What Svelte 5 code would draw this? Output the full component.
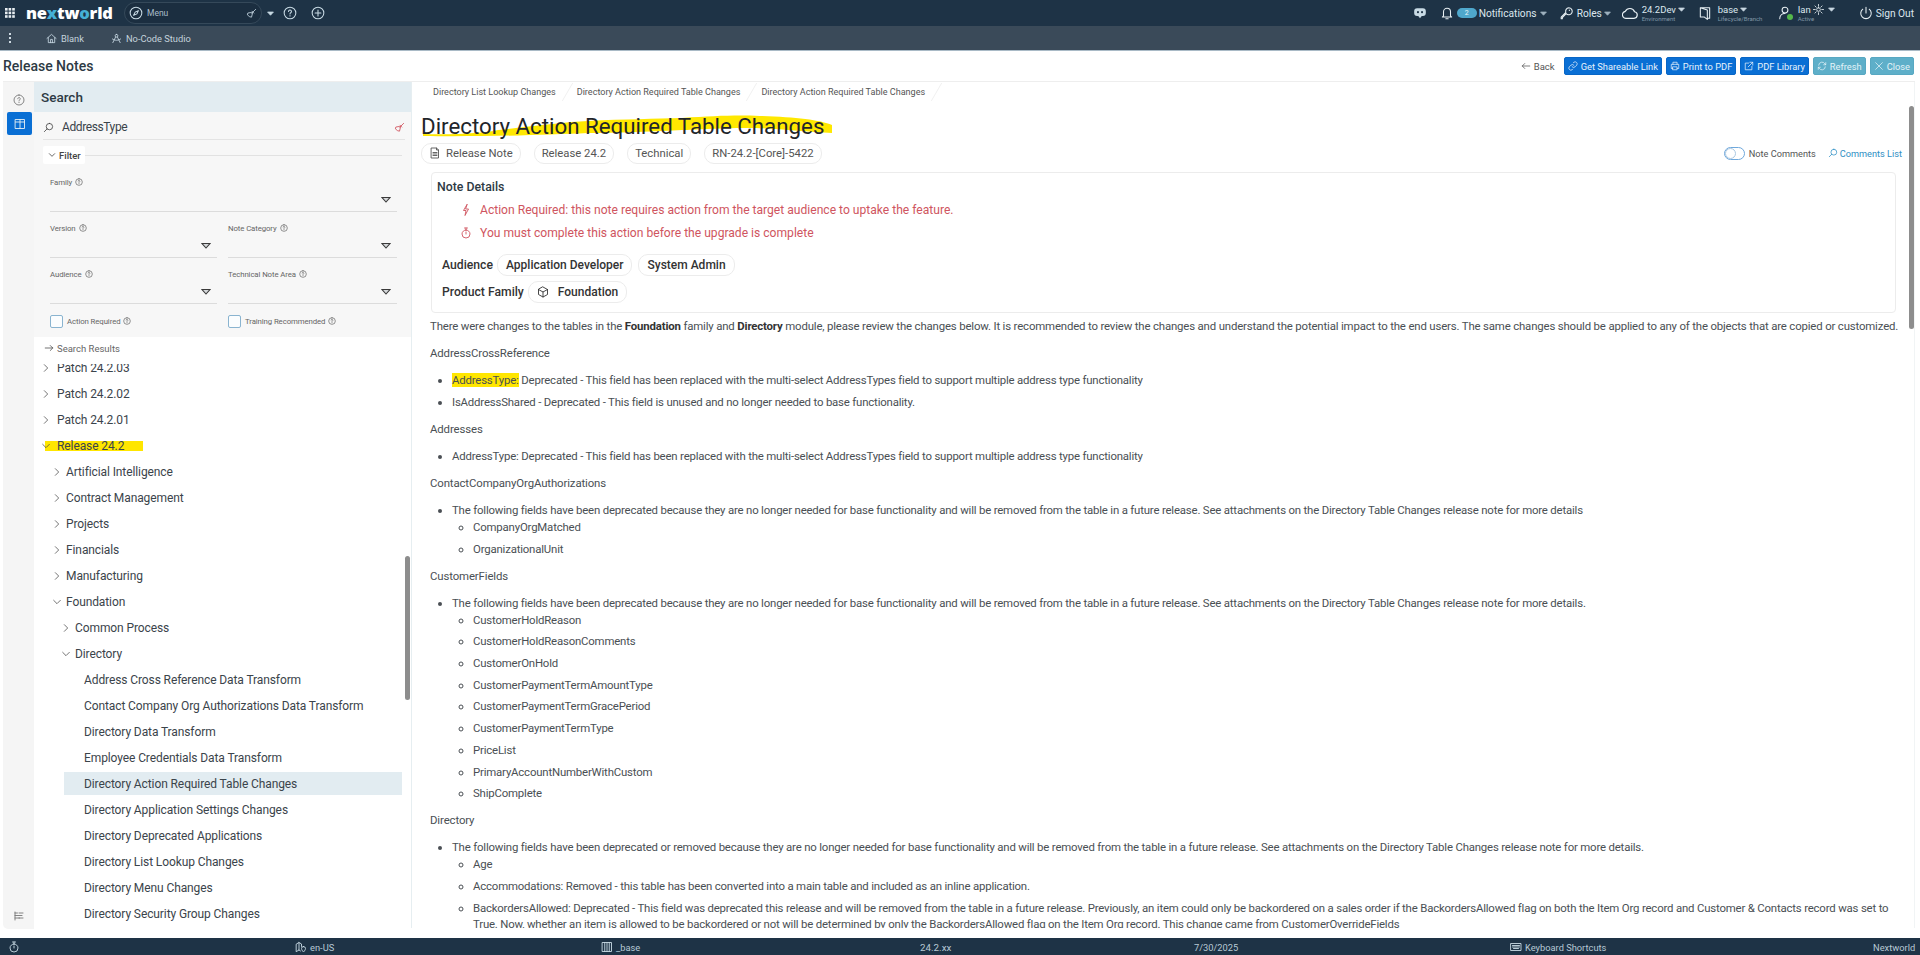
<script>
  const icons = {
    compass: 'M12 2a10 10 0 1 0 0 20a10 10 0 0 0 0-20z M16 8l-2.500 5.500L8 16l2.500-5.500z',
    broom: 'M21 3l-8 8 M13 7l4 4 M14 12l-2 8-4-1-5-4 1-4 6-1z',
    help: 'M12 2a10 10 0 1 0 0 20a10 10 0 0 0 0-20z M9.500 9.500a2.500 2.500 0 1 1 3.800 2.100c-.9.6-1.300 1-1.300 2 M12 16.500v.6',
    plus: 'M12 2a10 10 0 1 0 0 20a10 10 0 0 0 0-20z M12 7v10 M7 12h10',
    bell: 'M6 17v-7a6 6 0 0 1 12 0v7l2 2H4z M10 22h4',
    key: 'M15 3a6 6 0 1 1-4.500 10L4 20v2h-2v-3l8-8A6 6 0 0 1 15 3z M16 7v.6',
    cloud: 'M7 20h11a5 5 0 0 0 .8-9.900A7.500 7.500 0 0 0 5 9.500 5.300 5.300 0 0 0 7 20z',
    door: 'M4 3h16v18h-4 M4 3v16h7 M4 3l12 4v16l-5-4',
    user: 'M12 2a5 5 0 1 0 0 10a5 5 0 0 0 0-10z M3 22c0-6 4-9 9-9',
    sun: 'M12 8a4 4 0 1 0 0 8a4 4 0 0 0 0-8z M12 1v4 M12 19v4 M1 12h4 M19 12h4 M4.200 4.200l2.800 2.800 M17 17l2.800 2.800 M4.200 19.800l2.800-2.800 M17 7l2.800-2.800',
    power: 'M12 2v10 M6.500 5.500a9 9 0 1 0 11 0',
    home: 'M2 12l10-9 10 9 M5 10v11h14V10 M10 21v-7h4v7',
    studio: 'M12 3a3 3 0 1 0 0 6a3 3 0 0 0 0-6z M10 9L4 21 M14 9l6 12 M3 13c5 4 13 4 18 0',
    left: 'M21 12H3 M9 6l-6 6 6 6',
    right: 'M3 12h18 M15 6l6 6-6 6',
    link: 'M10 14a5 5 0 0 0 7 0l4-4a5 5 0 0 0-7-7l-1.500 1.500 M14 10a5 5 0 0 0-7 0l-4 4a5 5 0 0 0 7 7l1.500-1.500',
    print: 'M7 8V3h10v5 M7 18H3V8h18v10h-4 M7 14h10v7H7z',
    ext: 'M11 5H3v16h16v-8 M14 3h7v7 M21 3L10 14',
    refresh: 'M4 10a8 8 0 0 1 15-3l2 2 M21 4v5h-5 M20 14a8 8 0 0 1-15 3l-2-2 M3 20v-5h5',
    x: 'M4 4l16 16 M20 4L4 20',
    search: 'M14 3a7 7 0 1 0 0 14a7 7 0 0 0 0-14z M9 15l-6 6',
    cr: 'M8 4l8 8-8 8',
    cd: 'M4 8l8 8 8-8',
    doc: 'M5 2h10l4 4v16H5z M15 2v4h4 M8 11h8 M8 14h8 M8 17h8',
    bolt: 'M14 1L7 13h5l-2 10 7-13h-5z',
    timer: 'M12 6a8 8 0 1 0 0 16a8 8 0 0 0 0-16z M9 2h6 M12 2v4 M12 10v4',
    cube: 'M12 2l9 5v10l-9 5-9-5V7z M3 7l9 5 9-5 M12 12v10',
    map: 'M3 6l5-3v15l-5 3z M8 3l5 3v5 M8 18l3 2 M17 11a4 4 0 0 0-4 4c0 3 4 7 4 7s4-4 4-7a4 4 0 0 0-4-4z',
    cols: 'M3 3h18v18H3z M7.500 3v18 M12 3v18 M16.500 3v18',
    kb: 'M2 5h20v14H2z M5 9h14 M5 12h14 M7 15h10',
    sliders: 'M4 4v16 M4 6h5 M4 11h14 M4 16h9 M12 6h8 M12 16h8',
    box: 'M3 3h18v18H3z M3 8h18 M12 3v18'
  };
  const tree = [
    { t: 'Patch 24.2.03', l: 0, c: 'r' }, { t: 'Patch 24.2.02', l: 0, c: 'r' }, { t: 'Patch 24.2.01', l: 0, c: 'r' },
    { t: 'Release 24.2', l: 0, c: 'd', mark: true },
    { t: 'Artificial Intelligence', l: 1, c: 'r' }, { t: 'Contract Management', l: 1, c: 'r' }, { t: 'Projects', l: 1, c: 'r' },
    { t: 'Financials', l: 1, c: 'r' }, { t: 'Manufacturing', l: 1, c: 'r' }, { t: 'Foundation', l: 1, c: 'd' },
    { t: 'Common Process', l: 2, c: 'r' }, { t: 'Directory', l: 2, c: 'd' },
    { t: 'Address Cross Reference Data Transform', l: 3 }, { t: 'Contact Company Org Authorizations Data Transform', l: 3 },
    { t: 'Directory Data Transform', l: 3 }, { t: 'Employee Credentials Data Transform', l: 3 },
    { t: 'Directory Action Required Table Changes', l: 3, cur: true }, { t: 'Directory Application Settings Changes', l: 3 },
    { t: 'Directory Deprecated Applications', l: 3 }, { t: 'Directory List Lookup Changes', l: 3 },
    { t: 'Directory Menu Changes', l: 3 }, { t: 'Directory Security Group Changes', l: 3 }
  ];
  const baseMsg = 'because they are no longer needed for base functionality and will be removed from the table in a future release. See attachments on the Directory Table Changes release note for more details';
  const customer = ['CustomerHoldReason', 'CustomerHoldReasonComments', 'CustomerOnHold', 'CustomerPaymentTermAmountType', 'CustomerPaymentTermGracePeriod', 'CustomerPaymentTermType', 'PriceList', 'PrimaryAccountNumberWithCustom', 'ShipComplete'];
</script>

{#snippet ic(name, cls = '')}
  <svg class="ic {cls}" viewBox="0 0 24 24" aria-hidden="true"><path d={icons[name]} /></svg>
{/snippet}
{#snippet caret(cls = '')}
  <svg class="caret {cls}" viewBox="0 0 12 8" aria-hidden="true"><path d="M1 1.500h10L6 7z" /></svg>
{/snippet}

<div class="page">
  <header class="top">
    <svg class="grid" viewBox="0 0 10 10" aria-hidden="true">
      {#each [0, 3.6, 7.2] as y}{#each [0, 3.6, 7.2] as x}<rect {x} {y} width="2.600" height="2.600" />{/each}{/each}
    </svg>
    <div class="logo">ne<span class="lx">x</span>tw<span class="lo">o</span>rld</div>
    <div class="menu">
      {@render ic('compass', 'i14 pale')}
      <span class="menu-t">Menu</span>
      {@render ic('broom', 'i11 pale')}
    </div>
    {@render caret('c-menu pale-c')}
    {@render ic('help', 'i14 pale gap-help')}
    {@render ic('plus', 'i14 pale gap-plus')}
    <div class="spacer"></div>
    <svg class="bot" viewBox="0 0 24 24" aria-hidden="true">
      <path class="bot-face" d="M7 4h10a5 5 0 0 1 5 5v3a5 5 0 0 1-5 5h-2l-3 4-3-4H7a5 5 0 0 1-5-5V9a5 5 0 0 1 5-5z" />
      <circle class="bot-eye" cx="8.500" cy="10.500" r="1.800" /><circle class="bot-eye" cx="15.500" cy="10.500" r="1.800" />
    </svg>
    {@render ic('bell', 'i14 w m-bell')}
    <span class="badge">2</span>
    <span class="tn t-not">Notifications</span>
    {@render caret('c-top')}
    {@render ic('key', 'i14 w m-key')}
    <span class="tn t-roles">Roles</span>
    {@render caret('c-top c-tight')}
    {@render ic('cloud', 'i16 w m-cloud')}
    <div class="two t-env"><span>24.2Dev{@render caret('c-in')}</span><small>Environment</small></div>
    {@render ic('door', 'i14 w m-door')}
    <div class="two t-base"><span>base{@render caret('c-in')}</span><small>Lifecycle/Branch</small></div>
    <span class="userwrap">{@render ic('user', 'i14 w')}<i class="dot"></i></span>
    <div class="two t-ian"><span>Ian {@render ic('sun', 'i11 w')}{@render caret('c-in')}</span><small>Active</small></div>
    {@render ic('power', 'i14 w m-power')}
    <span class="tn t-sign">Sign Out</span>
  </header>

  <nav class="sub">
    <span class="dots"><i></i><i></i><i></i></span>
    {@render ic('home', 'i11 pale m-home')}
    <span class="sub-t">Blank</span>
    {@render ic('studio', 'i11 pale m-studio')}
    <span class="sub-t">No-Code Studio</span>
  </nav>

  <div class="title-row">
    <h1>Release Notes</h1>
    <div class="spacer"></div>
    <span class="back">{@render ic('left', 'i10')}Back</span>
    <button class="btn">{@render ic('link', 'i10')}Get Shareable Link</button>
    <button class="btn">{@render ic('print', 'i10')}Print to PDF</button>
    <button class="btn">{@render ic('ext', 'i10')}PDF Library</button>
    <button class="btn soft">{@render ic('refresh', 'i10')}Refresh</button>
    <button class="btn soft">{@render ic('x', 'i10')}Close</button>
  </div>

  <main class="main">
    <aside class="rail">
      {@render ic('help', 'i12 gray m-rail')}
      <span class="rail-btn">{@render ic('box', 'i12 w')}</span>
      <div class="spacer"></div>
      {@render ic('sliders', 'i12 gray m-sliders')}
    </aside>

    <section class="left">
      <div class="s-head">Search</div>
      <div class="filters">
        <div class="s-input">
          {@render ic('search', 'i11 dark')}
          <span class="s-val">AddressType</span>
          {@render ic('broom', 'i11 red')}
        </div>
        <div class="f-row"><span class="f-chip">{@render ic('cd', 'i8 dark')}Filter</span><i class="f-line"></i></div>
        <div class="f-grid">
          <div class="field span2"><label>Family {@render ic('help', 'i8 gray')}</label><div class="sel">{@render caret()}</div></div>
          <div class="field"><label>Version {@render ic('help', 'i8 gray')}</label><div class="sel">{@render caret()}</div></div>
          <div class="field"><label>Note Category {@render ic('help', 'i8 gray')}</label><div class="sel">{@render caret()}</div></div>
          <div class="field"><label>Audience {@render ic('help', 'i8 gray')}</label><div class="sel">{@render caret()}</div></div>
          <div class="field"><label>Technical Note Area {@render ic('help', 'i8 gray')}</label><div class="sel">{@render caret()}</div></div>
          <div class="check"><i class="box"></i><label>Action Required {@render ic('help', 'i8 gray')}</label></div>
          <div class="check"><i class="box"></i><label>Training Recommended {@render ic('help', 'i8 gray')}</label></div>
        </div>
      </div>
      <div class="results">{@render ic('right', 'i10 dark')}Search Results</div>
      <div class="tree">
        <div class="tree-in">
          {#each tree as n}
            <div class="row l{n.l}" class:cur={n.cur}>
              {#if n.mark}<span class="rel-mark">{n.t}</span>{:else}<span>{n.t}</span>{/if}
              {#if n.c}{@render ic(n.c === 'r' ? 'cr' : 'cd', 'i10 dark chev')}{/if}
            </div>
          {/each}
        </div>
        <i class="tree-bar"></i>
      </div>
    </section>

    <article class="right">
      <div class="crumbs">
        <span>Directory List Lookup Changes</span>
        <span>Directory Action Required Table Changes</span>
        <span>Directory Action Required Table Changes</span>
      </div>
      <div class="h-wrap">
        <svg class="brush" viewBox="0 0 430 34" aria-hidden="true">
          <path d="M8 26C40 27 70 25 83 22 120 18 150 14 173 13 210 11 240 11 267 10 300 8 320 7 345 8 380 9 405 12 417 17L417 25C390 24 360 20 333 20 300 20 280 22 267 22 230 24 200 25 173 25 130 27 60 29 8 28z" />
        </svg>
        <h2>Directory Action Required Table Changes</h2>
      </div>
      <div class="chips-row">
        <span class="chip">{@render ic('doc', 'i12')}Release Note</span>
        <span class="chip">Release 24.2</span>
        <span class="chip">Technical</span>
        <span class="chip">RN-24.2-[Core]-5422</span>
        <div class="spacer"></div>
        <i class="toggle"><b></b></i>
        <span class="nc">Note Comments</span>
        <span class="cl">{@render ic('search', 'i10')}Comments List</span>
      </div>
      <div class="note">
        <div class="note-h">Note Details</div>
        <div class="warn first">{@render ic('bolt', 'i12')}Action Required: this note requires action from the target audience to uptake the feature.</div>
        <div class="warn">{@render ic('timer', 'i12')}You must complete this action before the upgrade is complete</div>
        <div class="meta m1"><b>Audience</b><span class="mchip">Application Developer</span><span class="mchip">System Admin</span></div>
        <div class="meta"><b>Product Family</b><span class="mchip">{@render ic('cube', 'i12')}Foundation</span></div>
      </div>

      <div class="doc">
        <p class="lead">There were changes to the tables in the <strong>Foundation</strong> family and <strong>Directory</strong> module, please review the changes below. It is recommended to review the changes and understand the potential impact to the end users. The same changes should be applied to any of the objects that are copied or customized.</p>
        <p>AddressCrossReference</p>
        <ul>
          <li><mark>AddressType:</mark> Deprecated - This field has been replaced with the multi-select AddressTypes field to support multiple address type functionality</li>
          <li>IsAddressShared - Deprecated - This field is unused and no longer needed to base functionality.</li>
        </ul>
        <p>Addresses</p>
        <ul><li>AddressType: Deprecated - This field has been replaced with the multi-select AddressTypes field to support multiple address type functionality</li></ul>
        <p>ContactCompanyOrgAuthorizations</p>
        <ul>
          <li>The following fields have been deprecated {baseMsg}
            <ul><li>CompanyOrgMatched</li><li>OrganizationalUnit</li></ul>
          </li>
        </ul>
        <p>CustomerFields</p>
        <ul>
          <li>The following fields have been deprecated {baseMsg}.
            <ul>{#each customer as c}<li>{c}</li>{/each}</ul>
          </li>
        </ul>
        <p>Directory</p>
        <ul>
          <li>The following fields have been deprecated or removed {baseMsg}.
            <ul>
              <li>Age</li>
              <li>Accommodations: Removed - this table has been converted into a main table and included as an inline application.</li>
              <li>BackordersAllowed: Deprecated - This field was deprecated this release and will be removed from the table in a future release. Previously, an item could only be backordered on a sales order if the BackordersAllowed flag on both the Item Org record and Customer &amp; Contacts record was set to True. Now, whether an item is allowed to be backordered or not will be determined by only the BackordersAllowed flag on the Item Org record. This change came from CustomerOverrideFields</li>
            </ul>
          </li>
        </ul>
      </div>
      <i class="doc-bar"></i>
    </article>
  </main>

  <footer class="foot">
    {@render ic('timer', 'i12 pale')}
    <span>{@render ic('map', 'i12 pale')}en-US</span>
    <span>{@render ic('cols', 'i12 pale')}_base</span>
    <span class="f-ver">24.2.xx</span>
    <span>7/30/2025</span>
    <span>{@render ic('kb', 'i12 pale')}Keyboard Shortcuts</span>
    <span>Nextworld</span>
  </footer>
</div>

<style>
  :global(body) { margin: 0; background: #fff; }
  .page { width: 1920px; height: 955px; display: flex; flex-direction: column; overflow: hidden; font-family: Roboto, "Liberation Sans", sans-serif; color: #333; font-size: 13px; }
  .spacer { flex: 1; }

  .ic { fill: none; stroke: currentColor; stroke-width: 1.800; stroke-linecap: round; stroke-linejoin: round; flex: none; display: inline-block; vertical-align: middle; }
  .i8 { width: 8px; height: 8px; stroke-width: 2.400; }
  .i10 { width: 10px; height: 10px; }
  .i11 { width: 11px; height: 11px; }
  .i12 { width: 12px; height: 12px; }
  .i14 { width: 14px; height: 14px; }
  .i16 { width: 16px; height: 16px; }
  .pale { color: #c9dbe5; }
  .w { color: #e8f0f4; }
  .dark { color: #444; }
  .gray { color: #777; }
  .red { color: #cf4a55; }
  .caret { width: 10px; height: 7px; fill: #e6eef2; stroke: #333; stroke-width: 1.300; flex: none; }

  .top { height: 26px; background: #1e3346; display: flex; align-items: center; padding: 0 6px 0 5px; color: #dce7ee; flex: none; }
  .grid { width: 10px; height: 10px; fill: #e8eef2; flex: none; }
  .logo { margin-left: 11px; font: 800 16.500px/26px "Open Sans", sans-serif; color: #fff; letter-spacing: -0.200px; width: 87px; }
  .lx { color: #45b0d6; }
  .lo { color: #45b0d6; }
  .menu { margin-left: 11px; width: 138px; height: 22px; box-sizing: border-box; border: 1px solid #35495a; border-radius: 11px; display: flex; align-items: center; padding: 0 4px 0 4px; background: #1b2e40; }
  .menu-t { margin-left: 4px; flex: 1; font-size: 8.500px; color: #a9bcc8; }
  .c-menu { margin-left: 5px; width: 7px; height: 5px; }
  .pale-c { fill: #c9dbe5; stroke: #c9dbe5; }
  .gap-help { margin-left: 9px; }
  .gap-plus { margin-left: 14px; }
  .bot { width: 14px; height: 14px; flex: none; }
  .bot-face { fill: #c9dbe5; }
  .bot-eye { fill: #1e3346; }
  .m-bell { margin-left: 13px; }
  .badge { margin-left: 3px; width: 20px; height: 10px; border-radius: 5px; background: #4fa8cc; color: #e8f4f8; font-size: 7px; line-height: 10px; text-align: center; }
  .tn { font-size: 10.200px; color: #dce7ee; white-space: nowrap; }
  .t-not { margin-left: 2px; width: 57px; }
  .c-top { width: 7px; height: 5px; margin-left: 4px; fill: #9fb2bf; stroke: #9fb2bf; }
  .c-tight { margin-left: 2px; }
  .c-in { width: 7px; height: 5px; margin-left: 2px; fill: #c9d8e2; stroke: #c9d8e2; }
  .m-key { margin-left: 13px; }
  .t-roles { margin-left: 3px; width: 25px; }
  .m-cloud { margin-left: 11px; }
  .two { display: flex; flex-direction: column; margin-left: 4px; line-height: 9px; white-space: nowrap; }
  .two span { font-size: 9.500px; display: flex; align-items: center; line-height: 11px; }
  .two small { font-size: 6px; color: #8197a6; line-height: 8px; }
  .t-env { width: 46px; }
  .m-door { margin-left: 10px; }
  .t-base { margin-left: 6px; width: 50px; }
  .userwrap { position: relative; margin-left: 10px; width: 14px; height: 14px; display: flex; }
  .dot { position: absolute; right: -1px; bottom: 0; width: 6px; height: 6px; border-radius: 50%; background: #55b84c; }
  .t-ian { margin-left: 6px; width: 38px; }
  .t-ian span { gap: 2px; }
  .m-power { margin-left: 23px; }
  .t-sign { margin-left: 3px; }

  .sub { height: 25px; background: #3a4a59; border-bottom: 1px solid #a9bac6; display: flex; align-items: center; flex: none; box-sizing: border-box; }
  .dots { margin-left: 9px; display: flex; flex-direction: column; gap: 2px; width: 2px; }
  .dots i { width: 2px; height: 2px; background: #cfdbe3; display: block; }
  .m-home { margin-left: 35px; }
  .m-studio { margin-left: 27px; }
  .sub-t { margin-left: 4px; font-size: 9.300px; color: #c4d3dc; }

  .title-row { height: 30px; display: flex; align-items: center; padding: 0 6px 0 3px; flex: none; }
  h1 { margin: 0; font-size: 14px; font-weight: 500; color: #2d3a44; }
  .back { display: inline-flex; align-items: center; gap: 3px; font-size: 9.500px; color: #555; margin-right: 5px; }
  .btn { height: 18px; border: 1px solid #0866c6; border-radius: 2px; background: #0a6fd4; color: #e8f2fb; display: inline-flex; align-items: center; gap: 3px; font: 9.300px Roboto, sans-serif; padding: 0 3px; margin-left: 4px; white-space: nowrap; }
  .soft { background: #5eafc9; border-color: #58a8c2; color: #e4f3f8; }

  .main { height: 847px; display: flex; flex: none; margin-left: 3px; margin-right: 5px; border-top: 1px solid #eee; }
  .rail { width: 31px; background: #f5f5f5; display: flex; flex-direction: column; align-items: center; flex: none; border-radius: 0 0 0 5px; }
  .m-rail { margin-top: 12px; margin-left: 1px; }
  .rail-btn { margin-top: 6px; width: 25px; height: 23px; background: #0a6fd4; border-radius: 2px; display: flex; align-items: center; justify-content: center; margin-left: 2px; }
  .m-sliders { margin-bottom: 7px; }

  .left { width: 377px; flex: none; display: flex; flex-direction: column; }
  .s-head { height: 30px; background: #e2ecf1; font-size: 13.500px; font-weight: 500; line-height: 30px; padding-left: 7px; color: #2d3a44; flex: none; }
  .filters { height: 225px; background: #f7f7f7; flex: none; padding: 0 0 0 9px; box-sizing: border-box; }
  .s-input { height: 28px; display: flex; align-items: center; gap: 8px; margin-right: 6px; padding-top: 3px; box-sizing: border-box; border-bottom: 1px solid #e4e4e4; }
  .s-val { flex: 1; font-size: 12px; letter-spacing: -0.400px; color: #3b444b; }
  .f-row { display: flex; align-items: center; height: 18px; margin-top: 6px; }
  .f-chip { background: #fff; height: 18px; padding: 0 4px 0 5px; display: flex; align-items: center; gap: 3px; font-size: 9.500px; font-weight: 500; color: #444; border-radius: 2px; }
  .f-line { flex: 1; height: 1px; background: #e2e2e2; margin-right: 9px; }
  .f-grid { display: grid; grid-template-columns: 167px 169px; column-gap: 11px; padding-left: 7px; margin-top: 11px; }
  .span2 { grid-column: 1 / 3; }
  .field { height: 46px; }
  label { font-size: 7.800px; letter-spacing: -0.100px; color: #666; display: flex; align-items: center; gap: 3px; height: 14px; white-space: nowrap; }
  .sel { height: 19px; border-bottom: 1px solid #dcdcdc; display: flex; align-items: flex-end; justify-content: flex-end; padding: 0 6px 8px 0; box-sizing: content-box; margin-top: -5px; }
  .sel .caret { fill: #d5d8da; stroke: #3a3a3a; }
  .check { display: flex; align-items: center; gap: 4px; height: 14px; margin-top: 1px; }
  .box { width: 11px; height: 11px; border: 1px solid #8ab4d0; border-radius: 2px; background: #fbfdfe; display: block; }

  .results { height: 26.500px; display: flex; align-items: center; gap: 3px; padding-left: 10px; padding-bottom: 4px; box-sizing: border-box; font-size: 9.500px; color: #666; flex: none; }
  .tree { position: relative; height: 564.500px; overflow: hidden; flex: none; }
  .tree-in { margin-top: -9px; }
  .row { height: 26px; display: flex; align-items: center; font-size: 12px; letter-spacing: -0.100px; color: #3b444b; white-space: nowrap; box-sizing: border-box; position: relative; }
  .chev { position: absolute; top: 8px; }
  .l0 { padding-left: 23px; }
  .l0 .chev { left: 7px; }
  .l1 { padding-left: 32px; }
  .l1 .chev { left: 18px; }
  .l2 { padding-left: 41px; }
  .l2 .chev { left: 27px; }
  .l3 { padding-left: 50px; }
  .cur { background: #e2ecf1; margin: 1.500px 9px 1.500px 30px; height: 23px; padding-left: 20px; }
  .rel-mark { background: #ffe600; padding: 0 19px 0 12px; margin-left: -12px; height: 10px; display: inline-flex; align-items: center; }
  .tree-bar { position: absolute; right: 1px; top: 192px; width: 5px; height: 144px; background: #8d8d8d; border-radius: 3px; }

  .right { flex: 1; position: relative; border-left: 1px solid #e6eef1; border-right: 1px solid #f1f4f5; padding: 0 0 0 9px; min-width: 0; height: 846px; overflow: hidden; box-sizing: border-box; }
  .crumbs { height: 20px; display: flex; align-items: center; gap: 21px; padding-left: 12px; }
  .crumbs span { font-size: 9.050px; color: #555; white-space: nowrap; position: relative; }
  .crumbs span::after { content: ''; position: absolute; right: -12px; top: -4px; width: 1px; height: 18px; background: #f0f0f0; transform: skewX(-30deg); }
  .h-wrap { position: relative; margin-top: 12px; height: 24px; }
  h2 { position: relative; margin: 0; font-size: 22.300px; font-weight: 400; line-height: 24px; color: #1f252a; white-space: nowrap; }
  .brush { position: absolute; left: -6px; top: -6px; width: 430px; height: 34px; }
  .brush path { fill: #ffe800; }
  .chips-row { display: flex; align-items: center; gap: 13px; margin-top: 5px; height: 20px; padding-right: 12px; }
  .chip { height: 19px; border: 1px solid #ececec; border-radius: 10px; padding: 0 7px; display: inline-flex; align-items: center; gap: 5px; font-size: 11.300px; color: #555; white-space: nowrap; }
  .toggle { width: 21px; height: 13px; border: 1px solid #6fa8dc; border-radius: 7px; display: block; box-sizing: border-box; position: relative; margin-right: -9px; }
  .toggle b { position: absolute; left: 0; top: 0; width: 11px; height: 11px; border-radius: 50%; background: #fff; border: 1px solid #aac8e2; box-sizing: border-box; }
  .nc { font-size: 9.200px; color: #555; }
  .cl { font-size: 9.200px; color: #2f8fc4; display: inline-flex; align-items: center; gap: 2px; margin-left: -1px; }
  .note { margin: 9px 18px 0 10px; height: 141px; border: 1px solid #ececec; border-radius: 4px; box-sizing: border-box; padding: 6px 0 0 5px; }
  .note-h { font-size: 12.300px; font-weight: 500; line-height: 16px; color: #2d3a44; }
  .warn { color: #cf5560; font-size: 12.100px; display: flex; align-items: center; gap: 8px; height: 16px; margin-top: 7px; margin-left: 23px; }
  .warn.first { margin-top: 7px; }
  .meta { display: flex; align-items: center; margin-left: 5px; gap: 4px; height: 21px; margin-top: 6px; font-size: 12.200px; }
  .m1 { margin-top: 13px; }
  .meta b { font-weight: 500; color: #333; }
  .mchip { height: 20px; border: 1px solid #ececec; border-radius: 10px; padding: 0 8px; display: inline-flex; align-items: center; gap: 9px; color: #333; margin-right: 2px; font-weight: 500; font-size: 12px; }
  .doc { margin: 5px 0 0 9px; padding-right: 10px; font-size: 11.400px; letter-spacing: -0.120px; line-height: 16px; color: #4a4f54; }
  .doc p { margin: 0 0 11px; }
  .doc .lead { white-space: nowrap; letter-spacing: -0.160px; }
  .doc strong { font-weight: 700; color: #333; }
  .doc ul { margin: 0; padding: 0 0 5px 22px; }
  .doc li { margin-bottom: 6px; letter-spacing: -0.180px; }
  .doc li ul { margin: 1px 0 0; padding: 0 8px 0 21px; list-style: circle; }
  .doc li li { margin-bottom: 5.700px; }
  .doc li li:last-child { margin-bottom: 0; }
  mark { background: #ffe600; color: inherit; }
  .doc-bar { position: absolute; right: 0; top: 24px; width: 5px; height: 223px; background: #8d8d8d; border-radius: 3px; }

  .foot { height: 18px; background: #1e3346; display: grid; grid-template-columns: 287px 306px 319px 274px 316px 363px 1fr; align-items: center; padding: 0 0 0 8px; box-sizing: border-box; color: #b7c9d5; font-size: 9.300px; flex: none; margin-top: 9px; }
  .foot span { display: inline-flex; align-items: center; gap: 3px; }
  .f-ver { font-size: 9.800px; }
</style>
